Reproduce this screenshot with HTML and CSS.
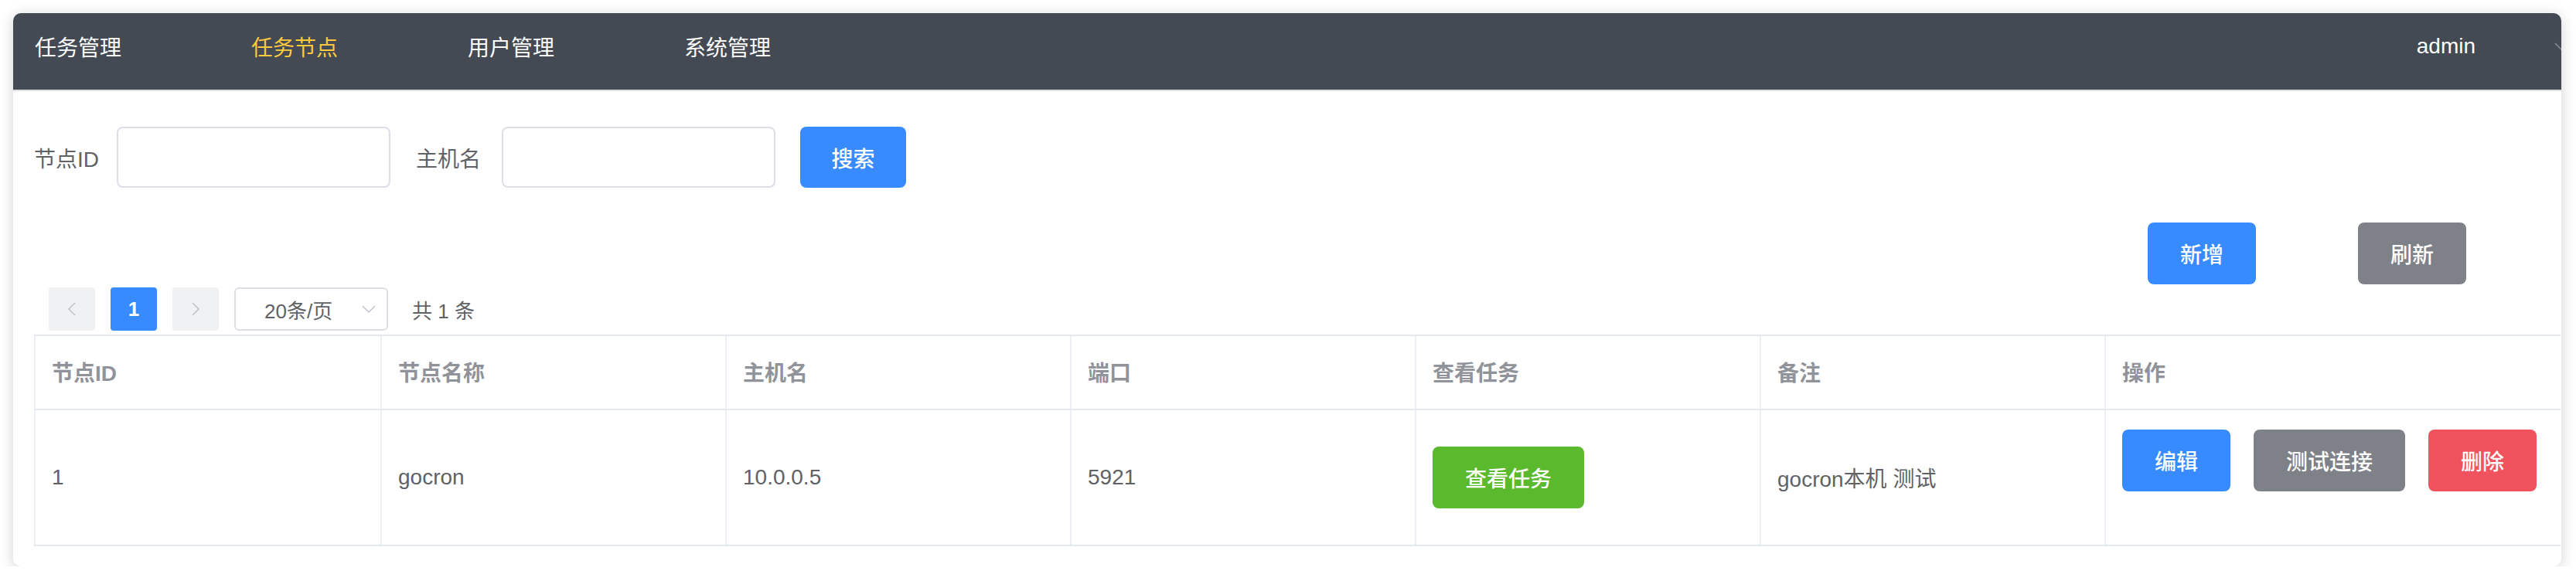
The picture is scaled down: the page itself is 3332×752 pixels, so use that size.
FILE: index.html
```html
<!DOCTYPE html>
<html lang="zh-CN">
<head>
<meta charset="utf-8">
<title>任务节点</title>
<link rel="stylesheet" href="styles.css">
</head>
<body>
<div class="card">
  <header class="topbar">
    <nav class="menu">
      <a class="menu-item">任务管理</a>
      <a class="menu-item active">任务节点</a>
      <a class="menu-item">用户管理</a>
      <a class="menu-item">系统管理</a>
    </nav>
    <div class="user">
      <span>admin</span>
      <svg class="user-arrow" width="20" height="12" viewBox="0 0 20 12"><polyline points="2,2 10,10 18,2" fill="none" stroke="#8a8f97" stroke-width="1.5"/></svg>
    </div>
  </header>

  <main class="content">
    <form class="search">
      <label class="field-label">节点ID</label>
      <input class="input" type="text">
      <label class="field-label label2">主机名</label>
      <input class="input" type="text">
      <button type="button" class="btn btn-primary btn-search">搜索</button>
    </form>

    <div class="toolbar">
      <button type="button" class="btn btn-primary">新增</button>
      <button type="button" class="btn btn-info">刷新</button>
    </div>

    <div class="pager">
      <span class="pg-btn"><svg width="12" height="20" viewBox="0 0 12 20"><polyline points="10,2 2,10 10,18" fill="none" stroke="#c0c4cc" stroke-width="1.6"/></svg></span>
      <span class="pg-btn pg-active">1</span>
      <span class="pg-btn"><svg width="12" height="20" viewBox="0 0 12 20"><polyline points="2,2 10,10 2,18" fill="none" stroke="#c0c4cc" stroke-width="1.6"/></svg></span>
      <span class="pg-select">20条/页<svg class="sel-arrow" width="18" height="10" viewBox="0 0 18 10"><polyline points="1,1 9,9 17,1" fill="none" stroke="#c0c4cc" stroke-width="1.5"/></svg></span>
      <span class="pg-total">共 1 条</span>
    </div>

    <table class="grid">
      <colgroup>
        <col class="c1"><col class="c"><col class="c"><col class="c"><col class="c"><col class="c"><col>
      </colgroup>
      <thead>
        <tr><th>节点ID</th><th>节点名称</th><th>主机名</th><th>端口</th><th>查看任务</th><th>备注</th><th>操作</th></tr>
      </thead>
      <tbody>
        <tr>
          <td>1</td>
          <td>gocron</td>
          <td>10.0.0.5</td>
          <td>5921</td>
          <td><button type="button" class="btn btn-success">查看任务</button></td>
          <td>gocron本机 测试</td>
          <td><div class="ops"><button type="button" class="btn btn-primary">编辑</button><button type="button" class="btn btn-info">测试连接</button><button type="button" class="btn btn-danger">删除</button></div></td>
        </tr>
      </tbody>
    </table>
  </main>
</div>
</body>
</html>
```

FILE: styles.css
```css
* { box-sizing: border-box; }
html, body { margin: 0; padding: 0; background: #fff; overflow: hidden; }
body {
  font-family: "Liberation Sans", "Noto Sans CJK SC", sans-serif;
  font-size: 28px;
  color: #606266;
}
.card {
  margin: 17px 0 0 17px;
  width: 3296px;
  height: 716px;
  border-radius: 10px;
  background: #fff;
  box-shadow: 0 3px 18px rgba(0, 0, 0, 0.18);
  overflow: hidden;
}
.topbar {
  height: 101px;
  background: #434a54;
  border-bottom: 2px solid #dedfe2;
  display: flex;
  align-items: center;
  padding-bottom: 14px;
  overflow: hidden;
}
.menu { display: flex; gap: 112px; padding-left: 0; }
.menu-item {
  color: #fff;
  padding: 0 28px;
  white-space: nowrap;
}
.menu-item.active { color: #ffc93c; }
.user {
  margin-left: auto;
  margin-right: -10px;
  display: flex;
  align-items: center;
  color: #fff;
  flex-shrink: 0;
}
.user-arrow { margin-left: 101px; flex-shrink: 0; }

.content { padding: 46px 0 0 27px; }
.search { display: flex; align-items: center; height: 79px; margin: 0; }
.field-label { margin-left: 0; margin-right: 23px; }
.label2 { margin-left: 33px; margin-right: 27px; }
.input {
  width: 354px;
  height: 79px;
  border: 2px solid #dcdfe6;
  border-radius: 8px;
  background: #fff;
  font: inherit;
  outline: none;
}
.btn {
  height: 80px;
  padding: 0 42px;
  border: 0;
  border-radius: 8px;
  color: #fff;
  font-family: "Liberation Sans", "Noto Sans CJK SC", sans-serif;
  font-size: 28px;
  font-weight: 500;
  white-space: nowrap;
  cursor: pointer;
}
.btn-primary { background: #388bff; }
.btn-info { background: #7f8189; }
.btn-success { background: #5bb92e; }
.btn-danger { background: #f0535d; }
.btn-search { margin-left: 32px; width: 137px; padding: 0; height: 79px; }

.toolbar {
  display: flex;
  justify-content: flex-end;
  gap: 132px;
  margin-top: 45px;
  padding-right: 123px;
}
.toolbar .btn { width: 140px; padding: 0; }

.pager {
  display: flex;
  align-items: center;
  height: 56px;
  margin-top: 4px;
  padding-left: 19px;
  font-size: 26px;
  color: #606266;
}
.pg-btn {
  width: 60px;
  height: 56px;
  border-radius: 4px;
  background: #f0f1f3;
  display: flex;
  align-items: center;
  justify-content: center;
  margin-right: 20px;
  font-size: 26px;
  font-weight: bold;
}
.pg-active { background: #388bff; color: #fff; }
.pg-select {
  width: 199px;
  height: 56px;
  border: 2px solid #dcdfe6;
  border-radius: 6px;
  display: flex;
  align-items: center;
  padding-left: 37px;
  color: #606266;
}
.sel-arrow { margin-left: auto; margin-right: 14px; }
.pg-total { margin-left: 31px; }

.grid {
  margin-top: 5px;
  width: 3268px;
  table-layout: fixed;
  border-collapse: collapse;
}
.grid col.c1 { width: 448px; }
.grid col.c { width: 446px; }
.grid th, .grid td {
  text-align: left;
  padding: 0 0 0 21px;
  border-top: 2px solid #e4e8ef;
  border-bottom: 2px solid #e4e8ef;
  border-left: 2px solid #ebeef4;
  white-space: nowrap;
}
.grid th {
  height: 96px;
  color: #909399;
  font-weight: bold;
  padding-bottom: 3px;
}
.grid td {
  height: 176px;
  color: #606266;
}
.ops {
  display: flex;
  gap: 30px;
  padding-bottom: 44px;
}
.ops .btn { padding: 0 42px; }
```
